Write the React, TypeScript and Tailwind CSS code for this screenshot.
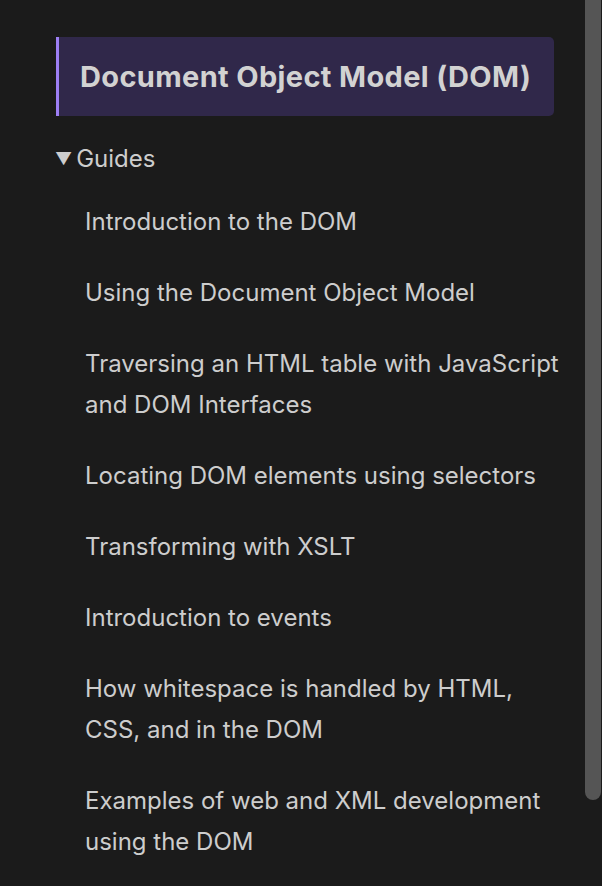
import React from "react";

const items: string[] = [
  "Introduction to the DOM",
  "Using the Document Object Model",
  "Traversing an HTML table with JavaScript and DOM Interfaces",
  "Locating DOM elements using selectors",
  "Transforming with XSLT",
  "Introduction to events",
  "How whitespace is handled by HTML, CSS, and in the DOM",
  "Examples of web and XML development using the DOM",
];

export default function App() {
  return (
    <div
      className="w-[602px] h-[886px] bg-[#1b1b1b] flex overflow-hidden text-[#cdcdcd]"
      style={{ fontFamily: "Inter, 'Noto Sans', sans-serif" }}
    >
      <div className="flex-1 pl-[56px] pr-[25px] pt-[37px]">
        <div className="w-[498px] h-[79px] bg-[#30284a] border-l-[3px] border-[#9d7ff5] rounded-r-[5px] flex items-center pl-[21px]">
          <span className="text-[29px] tracking-[0.35px] font-bold text-[#d2d2d2] whitespace-nowrap">
            Document Object Model (DOM)
          </span>
        </div>
        <div className="mt-[28px] flex items-center text-[24px] leading-[30px]">
          <span className="text-[17px] mr-[4px] -ml-[1px]">▼</span>
          <span>Guides</span>
        </div>
        <ul className="mt-[12px] pl-[29px]">
          {items.map((t, i) => (
            <li key={i} className="py-[15px] text-[24px] leading-[41px]">
              {t}
            </li>
          ))}
        </ul>
      </div>
      <div className="w-[16px] mr-[1px] h-[800px] bg-[#555555] rounded-b-full" />
    </div>
  );
}
